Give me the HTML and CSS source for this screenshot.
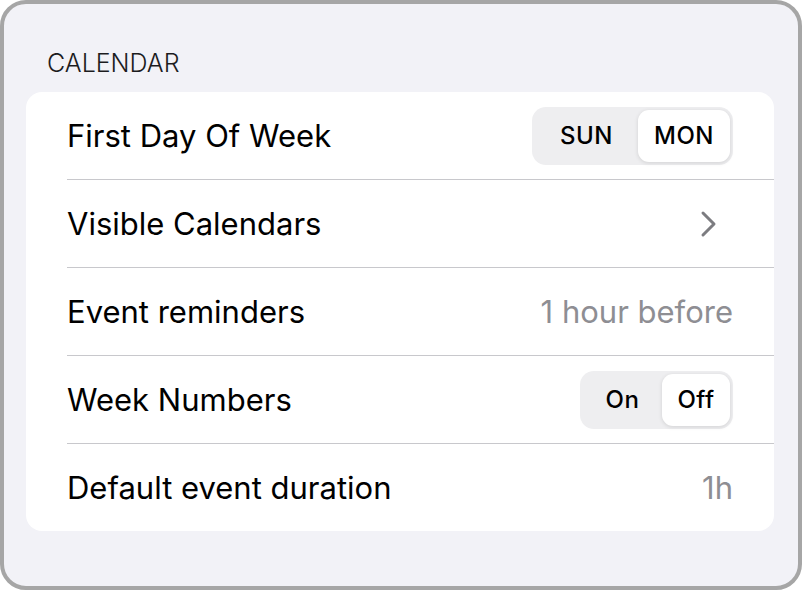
FILE: index.html
```html
<!DOCTYPE html>
<html>
<head>
    <meta charset="UTF-8">
    <meta name="viewport" content="width=device-width, initial-scale=1.0">
    <title>Calendar Settings</title>
    <link rel="stylesheet" href="styles.css">
</head>
<body>
    <div class="settings-frame">
        <div class="section-title">CALENDAR</div>
        <div class="settings-card">
            <div class="row">
                <span class="label">First Day Of Week</span>
                <div class="segmented">
                    <span class="seg day-sun">SUN</span>
                    <span class="seg day-mon active">MON</span>
                </div>
            </div>
            <div class="row">
                <span class="label">Visible Calendars</span>
                <svg class="chevron" width="20" height="28" viewBox="0 0 20 28">
                    <path d="M4 3 L15 14 L4 25" fill="none" stroke="#7c7c80" stroke-width="3" stroke-linecap="round" stroke-linejoin="round"/>
                </svg>
            </div>
            <div class="row">
                <span class="label">Event reminders</span>
                <span class="value">1 hour before</span>
            </div>
            <div class="row">
                <span class="label">Week Numbers</span>
                <div class="segmented">
                    <span class="seg opt-on">On</span>
                    <span class="seg opt-off active">Off</span>
                </div>
            </div>
            <div class="row">
                <span class="label">Default event duration</span>
                <span class="value">1h</span>
            </div>
        </div>
    </div>
</body>
</html>
```

FILE: styles.css
```css
body {
    margin: 0;
    padding: 0;
    font-family: Inter, "Liberation Sans", sans-serif;
    background: #ffffff;
}
.settings-frame {
    box-sizing: border-box;
    width: 802px;
    height: 590px;
    border: 4px solid #a6a6a6;
    border-radius: 26px;
    background-color: #f2f2f7;
    padding: 0 24px 0 22px;
}
.section-title {
    font-size: 25px;
    font-weight: 300;
    color: #1c1c1e;
    padding: 45px 0 0 21px;
    height: 43px;
    line-height: 28px;
}
.settings-card {
    background-color: #ffffff;
    border-radius: 16px;
    overflow: hidden;
}
.row {
    height: 87px;
    display: flex;
    align-items: center;
    justify-content: space-between;
    padding: 0 41px 0 0;
    margin-left: 41px;
    border-bottom: 1px solid #c8c8cc;
}
.row:last-child {
    border-bottom: none;
}
.label {
    font-size: 31px;
    color: #000000;
}
.value {
    font-size: 31px;
    color: #8e8e93;
}
.chevron {
    margin-right: 14px;
}
.segmented {
    display: flex;
    background-color: #eeeef0;
    border-radius: 14px;
    padding: 3px;
    height: 52px;
}
.seg {
    display: flex;
    align-items: center;
    justify-content: center;
    font-size: 24px;
    font-weight: 500;
    letter-spacing: 0.5px;
    color: #000000;
    border-radius: 11px;
}
.day-sun {
    width: 103px;
}
.day-mon {
    width: 92px;
}
.opt-on {
    width: 79px;
}
.opt-off {
    width: 68px;
}
.seg.active {
    background-color: #ffffff;
    box-shadow: 0 1px 4px rgba(0, 0, 0, 0.12);
}
```
